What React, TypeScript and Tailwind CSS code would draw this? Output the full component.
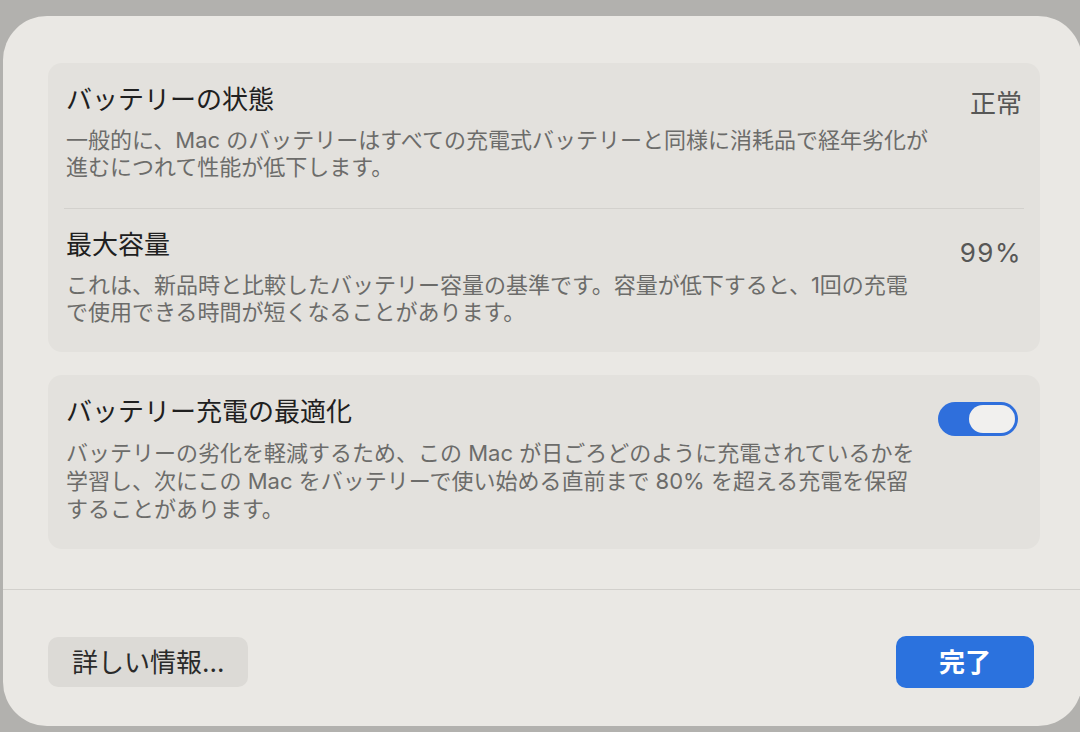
import React from 'react';

const font = { fontFamily: 'Inter, "Noto Sans CJK JP", sans-serif' };

type RowProps = {
  title: string;
  lines: string[];
  right?: React.ReactNode;
  className?: string;
  leading?: string;
};

const Row: React.FC<RowProps> = ({ title, lines, right, className = '', leading = 'leading-[27px]' }) => (
  <div className={`flex justify-between items-start pl-[18px] pr-[18px] ${className}`}>
    <div className="flex flex-col">
      <p className="text-[26px] leading-[34px] text-[#202020]">{title}</p>
      <div className={`mt-[10px] text-[22px] text-[#6c6c6a] ${leading}`}>
        {lines.map((l) => (
          <p key={l} className="whitespace-nowrap">{l}</p>
        ))}
      </div>
    </div>
    {right}
  </div>
);

const Toggle: React.FC = () => (
  <div className="mt-[7px] mr-[4px] w-[80px] h-[34px] rounded-full bg-[#2f6fdc] flex items-center justify-end pr-[3px]">
    <div className="w-[46px] h-[28px] rounded-full bg-[#f1f0ee]" />
  </div>
);

export default function App() {
  return (
    <div className="w-[1080px] h-[732px] bg-[#b2b1ae] overflow-hidden pt-[16px] pl-[3px]" style={font}>
      <div className="w-[1079px] h-[710px] rounded-[44px] bg-[#eae8e4] flex flex-col">
        <div className="pl-[45px] pr-[42px] pt-[47px] flex flex-col gap-[23px]">
          {/* 状態と容量 */}
          <div className="rounded-[14px] bg-[#e3e1dd] flex flex-col">
            <Row
              className="pt-[20px] pb-[27px]"
              title="バッテリーの状態"
              lines={[
                '一般的に、Mac のバッテリーはすべての充電式バッテリーと同様に消耗品で経年劣化が',
                '進むにつれて性能が低下します。',
              ]}
              right={<span className="mt-[4px] text-[26px] leading-[34px] text-[#575756]">正常</span>}
            />
            <div className="mx-[16px] h-px bg-[#d3d1cd]" />
            <Row
              className="pt-[19px] pb-[26px]"
              title="最大容量"
              lines={[
                'これは、新品時と比較したバッテリー容量の基準です。容量が低下すると、1回の充電',
                'で使用できる時間が短くなることがあります。',
              ]}
              right={<span className="mt-[8px] text-[26px] leading-[34px] tracking-[1.5px] text-[#575756]">99%</span>}
            />
          </div>

          {/* 充電の最適化 */}
          <div className="rounded-[14px] bg-[#e3e1dd]">
            <Row
              className="pt-[20px] pb-[26px]"
              leading="leading-[28px]"
              title="バッテリー充電の最適化"
              lines={[
                'バッテリーの劣化を軽減するため、この Mac が日ごろどのように充電されているかを',
                '学習し、次にこの Mac をバッテリーで使い始める直前まで 80% を超える充電を保留',
                'することがあります。',
              ]}
              right={<Toggle />}
            />
          </div>
        </div>

        <div className="mt-[40px] h-px bg-[#d2d0cc]" />

        <div className="flex justify-between items-center pl-[45px] pr-[48px] pt-[46px]">
          <button className="h-[50px] px-[24px] rounded-[10px] bg-[#dcdad6] text-[26px] text-[#2a2a2a]">
            詳しい情報...
          </button>
          <button className="h-[52px] w-[138px] rounded-[10px] bg-[#2b72de] text-[26px] font-bold text-white">
            完了
          </button>
        </div>
      </div>
    </div>
  );
}
